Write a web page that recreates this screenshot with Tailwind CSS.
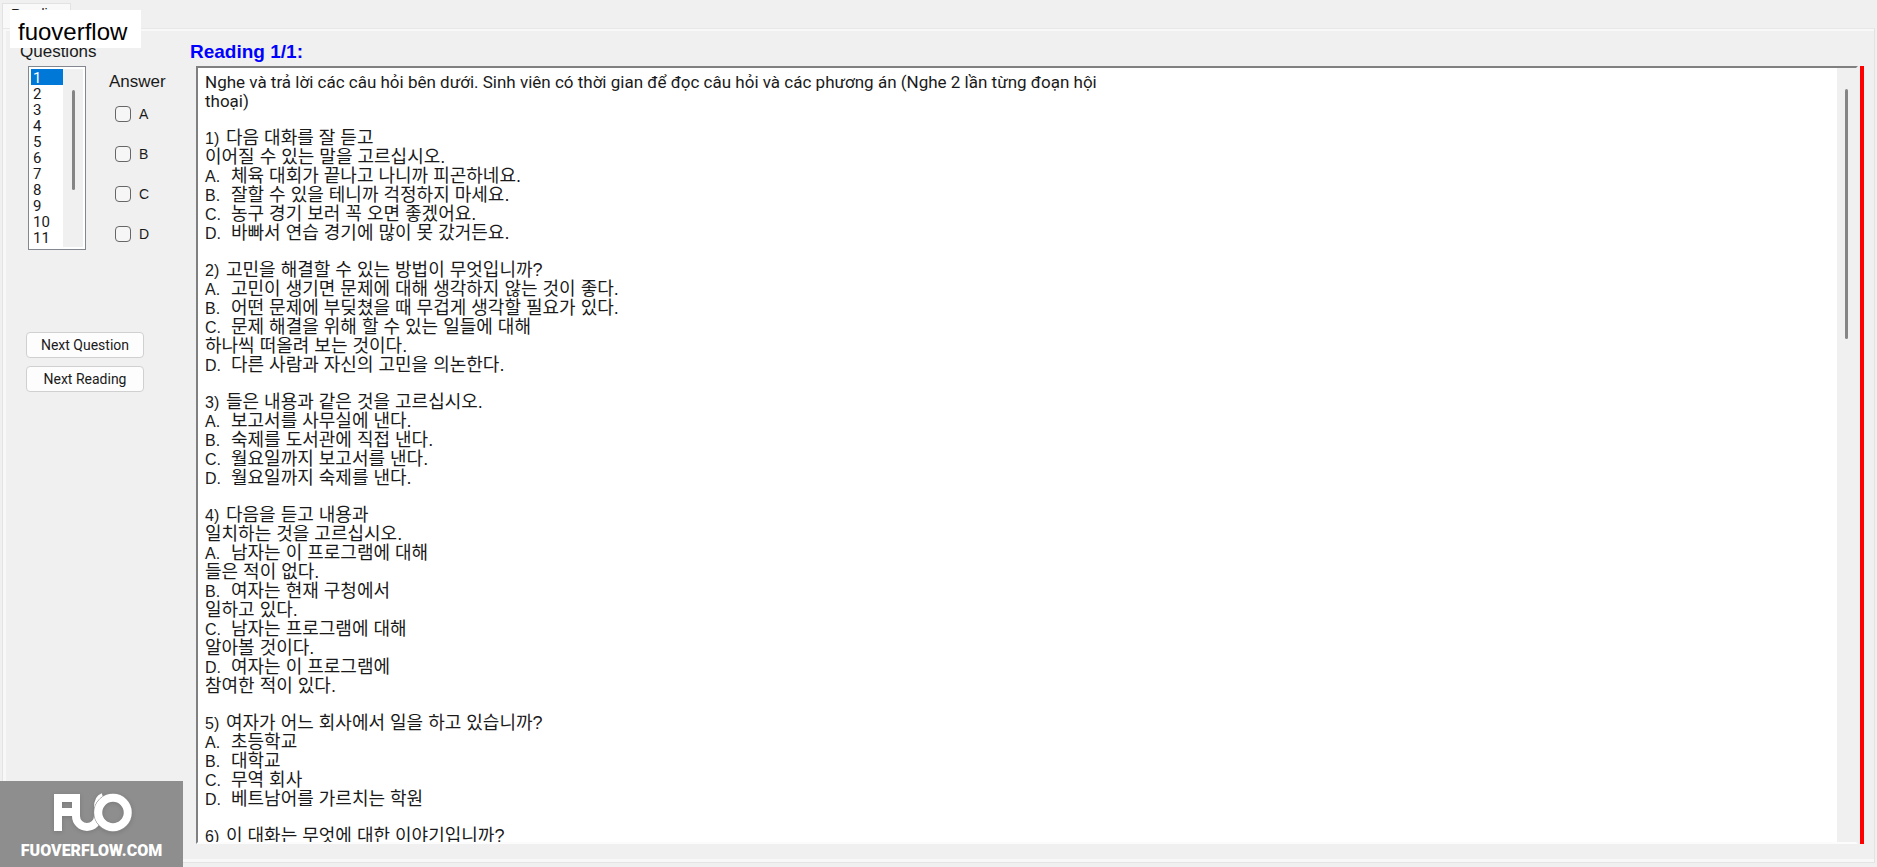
<!DOCTYPE html>
<html lang="vi">
<head>
  <meta charset="UTF-8">
  <meta name="viewport" content="width=device-width, initial-scale=1.0">
  <title>Reading</title>
  <script src="https://cdn.jsdelivr.net/npm/@tailwindcss/browser@4"></script>
</head>
<body class="relative flex h-screen flex-col overflow-hidden bg-[#f0f0f0] pb-1 font-['Liberation_Sans','Noto_Sans_CJK_KR',sans-serif] text-[#1a1a1a]">
  <!-- Tab strip -->
  <nav class="flex h-7 shrink-0 items-end pl-0.5">
    <a href="#reading" class="block h-[25px] w-[69px] overflow-hidden border border-b-0 border-[#e2e2e2] bg-[#f9f9f9] pl-2 pt-0.5 text-[14px] leading-4">Reading</a>
  </nav>

  <!-- Tab page -->
  <main id="reading" class="mx-0.5 flex min-h-0 flex-1 border border-[#e4e4e4] border-t-[#e8e8e8]">
    <div class="flex min-w-0 flex-1 border-[3px] border-t-2 border-r-0 border-[#f8f8f8] pb-[15px] pr-2.5">
      <aside class="w-[184px] shrink-0 pl-3.5 pt-[11px]">
        <label for="questions" class="block h-6 text-[17px] leading-5">Questions</label>
        <div class="flex">
          <div class="ml-2 flex h-[184px] w-[58px] border border-[#828790] bg-white p-0.5">
            <select id="questions" size="11" class="min-w-0 flex-1 appearance-none overflow-hidden bg-white font-[Roboto,sans-serif] text-[15px] leading-4 outline-none [scrollbar-width:none]"></select>
            <div class="flex w-5 justify-center bg-[#f0f0f0] pt-[21px]">
              <div class="h-[100px] w-[3px] rounded-full bg-[#858585]"></div>
            </div>
          </div>
          <fieldset class="ml-[23px] pt-1">
            <legend class="float-left pt-0.5 text-[17px] leading-5">Answer</legend>
            <div id="answers" class="clear-both flex flex-col gap-5 pl-1.5 pt-3"></div>
          </fieldset>
        </div>
        <div class="mt-[82px] ml-1.5 flex w-[118px] flex-col gap-2">
          <button class="h-[26px] rounded border border-[#d0d0d0] bg-[#fdfdfd] font-[Roboto,sans-serif] text-[14px]">Next Question</button>
          <button class="h-[26px] rounded border border-[#d0d0d0] bg-[#fdfdfd] font-[Roboto,sans-serif] text-[14px]">Next Reading</button>
        </div>
      </aside>

      <section class="flex min-w-0 flex-1 flex-col pt-[11px]">
        <h1 class="h-6 shrink-0 text-[19px] font-bold leading-5 text-[#0000ff]">Reading 1/1:</h1>
        <div class="ml-1.5 flex min-h-0 flex-1">
          <div class="flex min-w-0 flex-1 border-2 border-[#808080] border-r-[#f0f0f0] border-b-[#fcfcfc] bg-white">
            <div id="passage" class="flex min-w-0 flex-1 flex-col gap-[18px] overflow-hidden pl-[7px] pt-[5px] text-[16px] leading-[19px]"></div>
            <div class="flex w-[19px] justify-center bg-[#f0f0f0] pt-[21px]">
              <div class="h-[250px] w-[3px] rounded-full bg-[#858585]"></div>
            </div>
          </div>
          <div class="ml-0.5 w-1 bg-[#ff0000]"></div>
        </div>
      </section>
    </div>
  </main>

  <!-- Watermarks -->
  <div class="absolute left-2.5 top-2.5 bg-white pb-0.5 pl-2 pr-3.5 pt-2 text-[24px] leading-7 text-black">fuoverflow</div>
  <div class="absolute bottom-0 left-0 flex h-[86px] w-[183px] flex-col items-center bg-[#8e8e8e] pt-3 text-white">
    <svg viewBox="0 0 80 40" class="h-10 w-20 drop-shadow-sm" fill="none" stroke="#fff" stroke-width="8">
      <path d="M6 38V5H24M6 19H24" />
      <path d="M24 1V23A11 11 0 0 0 46 23V15C46 9 48 5 51 4" />
      <circle cx="61" cy="19.500" r="19" stroke="#8e8e8e" stroke-width="1" />
      <circle cx="61" cy="19.500" r="14.750" />
    </svg>
    <span class="mt-1.5 font-[Roboto,sans-serif] text-[16px] font-black leading-6">FUOVERFLOW.COM</span>
  </div>

  <script>
    const passage = [
      [
        'Nghe và trả lời các câu hỏi bên dưới. Sinh viên có thời gian để đọc câu hỏi và các phương án (Nghe 2 lần từng đoạn hội',
        'thoại)'
      ],
      [
        '1) 다음 대화를 잘 듣고',
        '이어질 수 있는 말을 고르십시오.',
        'A. 체육 대회가 끝나고 나니까 피곤하네요.',
        'B. 잘할 수 있을 테니까 걱정하지 마세요.',
        'C. 농구 경기 보러 꼭 오면 좋겠어요.',
        'D. 바빠서 연습 경기에 많이 못 갔거든요.'
      ],
      [
        '2) 고민을 해결할 수 있는 방법이 무엇입니까?',
        'A. 고민이 생기면 문제에 대해 생각하지 않는 것이 좋다.',
        'B. 어떤 문제에 부딪쳤을 때 무겁게 생각할 필요가 있다.',
        'C. 문제 해결을 위해 할 수 있는 일들에 대해',
        '하나씩 떠올려 보는 것이다.',
        'D. 다른 사람과 자신의 고민을 의논한다.'
      ],
      [
        '3) 들은 내용과 같은 것을 고르십시오.',
        'A. 보고서를 사무실에 낸다.',
        'B. 숙제를 도서관에 직접 낸다.',
        'C. 월요일까지 보고서를 낸다.',
        'D. 월요일까지 숙제를 낸다.'
      ],
      [
        '4) 다음을 듣고 내용과',
        '일치하는 것을 고르십시오.',
        'A. 남자는 이 프로그램에 대해',
        '들은 적이 없다.',
        'B. 여자는 현재 구청에서',
        '일하고 있다.',
        'C. 남자는 프로그램에 대해',
        '알아볼 것이다.',
        'D. 여자는 이 프로그램에',
        '참여한 적이 있다.'
      ],
      [
        '5) 여자가 어느 회사에서 일을 하고 있습니까?',
        'A. 초등학교',
        'B. 대학교',
        'C. 무역 회사',
        'D. 베트남어를 가르치는 학원'
      ],
      [
        '6) 이 대화는 무엇에 대한 이야기입니까?'
      ]
    ];

    function renderLine(line) {
      const match = line.match(/^([A-D]\.|\d\)) (.*)$/);
      if (match) {
        const width = match[1].endsWith('.') ? 'w-[26px]' : 'w-[21px]';
        return `<p class="flex h-[19px]"><span class="${width} shrink-0">${match[1]}</span><span lang="ko" class="whitespace-nowrap text-[18px]">${match[2]}</span></p>`;
      }
      // Korean continuation lines use the larger size too
      const font = /[가-힣]/.test(line) ? 'text-[18px]' : 'font-[Roboto,sans-serif] text-[17px]';
      return `<p class="h-[19px] whitespace-nowrap ${font}">${line}</p>`;
    }

    document.getElementById('passage').innerHTML = passage
      .map(block => `<div>${block.map(renderLine).join('')}</div>`)
      .join('');

    let options = '';
    for (let i = 1; i <= 11; i++) {
      options += i === 1
        ? `<option selected class="h-4 min-h-4 bg-linear-to-r from-[#0078d7] to-[#0078d7] px-0.5 py-0 leading-4 text-white">${i}</option>`
        : `<option class="h-4 min-h-4 px-0.5 py-0 leading-4">${i}</option>`;
    }
    document.getElementById('questions').innerHTML = options;

    document.getElementById('answers').innerHTML = ['A', 'B', 'C', 'D'].map(letter => `
      <label class="flex h-5 items-center gap-2 text-[14px] leading-5">
        <input type="checkbox" name="answer" value="${letter}" class="size-4 appearance-none rounded border border-[#666666] bg-[#f6f6f6] checked:bg-[#0078d7]">${letter}
      </label>`).join('');
  </script>
</body>
</html>
